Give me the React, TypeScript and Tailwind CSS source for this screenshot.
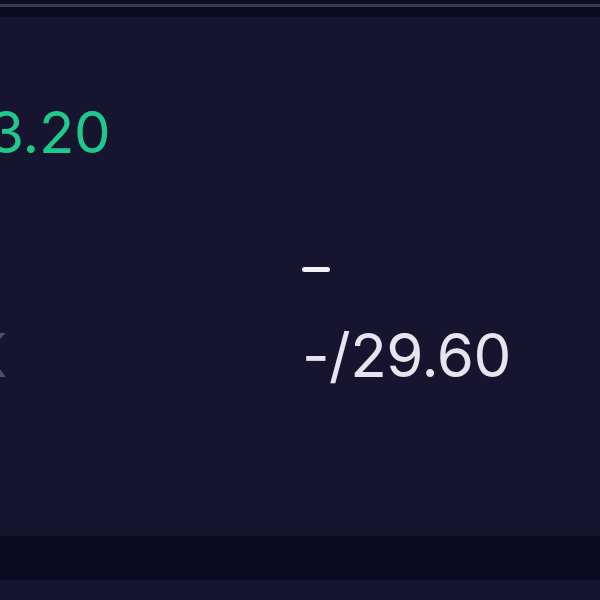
export default function App() {
  return (
    <div
      className="flex h-[600px] w-[600px] flex-col overflow-hidden bg-[#16142f]"
      style={{ fontFamily: 'Inter, "Liberation Sans", sans-serif' }}
    >
      <div className="h-[4px] bg-[#0e0d26]" />
      <div className="h-[3px] bg-[#3b3855]" />
      <div className="h-[10px] bg-[#0b0a21]" />

      <main className="flex flex-1 flex-col">
        <div className="mt-[83px] flex h-[64px] items-center overflow-hidden">
          <span className="-ml-[35px] text-[58px] leading-none font-normal tracking-[-0.3px] text-[#1ec98b]">13.20</span>
        </div>

        <div className="mt-[70px] grid grid-cols-[302px_1fr]">
          <div />
          <div className="flex h-[70px] items-center">
            <div className="h-[5px] w-[28px] rounded-full bg-[#f1eff8] blur-[0.6px]" />
          </div>
        </div>

        <div className="mt-[19px] grid grid-cols-[302px_1fr]">
          <div className="flex h-[64px] items-center overflow-hidden">
            <span className="-ml-[33px] text-[60px] leading-none text-[#4f4c6c]">K</span>
          </div>
          <div className="flex h-[64px] items-center">
            <span className="text-[60px] leading-none tracking-[-0.5px] text-[#e6e4ef]">-/29.60</span>
          </div>
        </div>
      </main>

      <div className="h-[44px] bg-[#0b0a21]" />
      <div className="h-[20px] bg-[#16142f]" />
    </div>
  );
}
